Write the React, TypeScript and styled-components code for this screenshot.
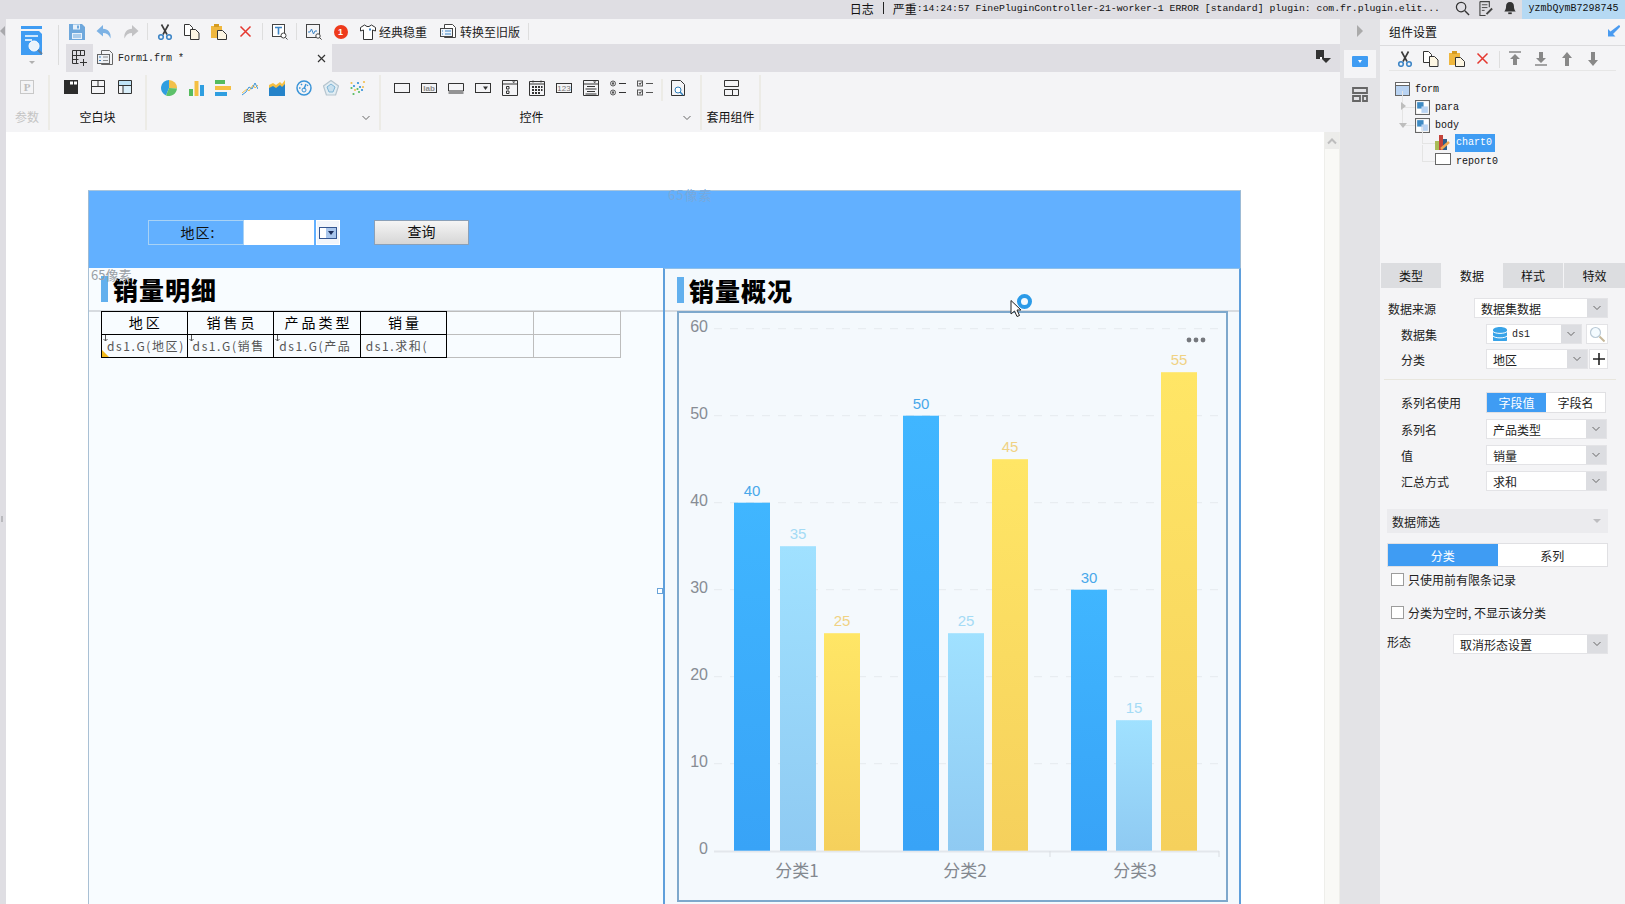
import React from "react";
import styled, { createGlobalStyle } from "styled-components";

const UI = `"Noto Sans CJK SC", "Liberation Sans", sans-serif`;
const MONO = `"Liberation Mono", "Noto Sans CJK SC", monospace`;

const Global = createGlobalStyle`
  html, body { margin: 0; padding: 0; background: #f4f4f6; }
  * { box-sizing: border-box; }
  body { font-family: ${UI}; font-size: 12px; color: #222; }
`;

const Ico = styled.svg<{ $s?: number }>`
  display: block;
  flex: none;
  width: ${(p) => p.$s ?? 16}px;
  height: ${(p) => p.$s ?? 16}px;
`;

const K = "#333";
const icons: Record<string, React.ReactNode> = {
  save: (<><path fill="#6fa8dc" d="M0 0h13l3 3v13H0z" /><rect x="4" y="0.5" width="7" height="5" fill="#e8f1fa" /><rect x="8" y="1.5" width="2" height="3" fill="#6fa8dc" /><rect x="3" y="9" width="10" height="6" fill="#e8f1fa" /><path stroke="#6fa8dc" d="M4 11h8M4 13h8" /></>),
  undo: <path fill="#7db2e4" d="M7 1 0.5 7 7 12.5V9c3.5 0 6 1.6 7.5 5.5C15.5 9 12 4.8 7 4.8z" />,
  redo: <path fill="#c2c2c4" d="M9 1l6.5 6L9 12.5V9c-3.5 0-6 1.6-7.5 5.5C.5 9 4 4.8 9 4.8z" />,
  cut: (<><path stroke="#3a3a3a" strokeWidth="1.6" fill="none" d="M4.5 0.5l5.5 10M11.5 0.5L6 10.5" /><circle cx="4" cy="13" r="2.3" fill="none" stroke="#3d85c6" strokeWidth="1.6" /><circle cx="12" cy="13" r="2.3" fill="none" stroke="#3d85c6" strokeWidth="1.6" /></>),
  copy: (<><path fill="#fff" stroke={K} d="M.5.5h5l3 3v8h-8z" /><path fill="#fdf6e3" stroke={K} d="M6.5 5.5h5l3.5 3.5v6.5H6.5z" /></>),
  paste: (<><rect x="0" y="2" width="11" height="12" fill="#efb73e" /><rect x="3" y="0" width="5" height="3" fill="#d59b20" /><path fill="#fdf6e3" stroke={K} d="M6.5 6.5h5l4 4v5h-9z" /></>),
  del: <path stroke="#e5372f" strokeWidth="1.5" d="M2.5 2.5l10 10M12.5 2.5l-10 10" />,
  tsearch: (<><rect x="0.5" y="0.5" width="12" height="12" fill="#fff" stroke="#444" /><path stroke="#3d85c6" strokeWidth="1.6" d="M3 3.5h7M6.5 3.5v7" /><circle cx="11.5" cy="11.5" r="2.5" fill="#fff" stroke="#444" /><path stroke="#444" d="M13.5 13.5l2 2" /></>),
  preview: (<><rect x="0.5" y="0.5" width="13" height="13" fill="none" stroke="#444" /><path fill="none" stroke="#3d85c6" d="M2 8h2l1.5-3 2 5 1.5-3h2" /><circle cx="12" cy="12" r="2.2" fill="#fff" stroke="#444" /><path stroke="#444" d="M13.6 13.6l2 2" /></>),
  shirt: (<><path fill="#fff" stroke={K} d="M4.5 1L.5 3.5v3.5l3-1v9.5h9V6l3 1V3.5L11.5 1 9 2.5H7z" /><rect x="9" y="4.5" width="2" height="2" fill="#3d85c6" /></>),
  oldver: (<><path fill="#fff" stroke="#444" d="M4.5.5h8l3 3v10h-11z" /><rect x="0.5" y="4.5" width="12" height="8" fill="#eef4fb" stroke="#444" /><path stroke="#3d85c6" d="M2 7h1M2 10h1M5 7h6M5 10h6" /></>),
  tabadd: (<><path fill="none" stroke={K} d="M.5.5h12v5M.5.5v13h6M4.5.5v13M8.5.5v5M.5 5.5h12M.5 9.5h6" /><path stroke={K} d="M8 12.5h7M11.5 9v7" /></>),
  formdoc: (<><path fill="#f4f4f6" stroke="#666" d="M4.5.5h8l3 3v11h-11z" /><rect x="0.5" y="4.5" width="12" height="9" fill="#eef1f5" stroke="#666" /><path stroke="#3d85c6" d="M2 7h2M2 10.5h2" /><path stroke="#8a8a8a" d="M6 7h5M6 10.5h5" /></>),
  pin: (<><rect x="0" y="0" width="8" height="9" fill="#333" /><path fill="#333" d="M5 8h10l-5 5z" /><path fill="#fff" d="M4 7h2v2H4z" /></>),
  pie: (<><path fill="#2f9ee0" d="M8 8V0a8 8 0 0 0-3 15.4z" /><path fill="#f2c04a" d="M8 0a8 8 0 0 1 8 8.5L8 8z" /><path fill="#5dc16a" d="M16 8.5A8 8 0 0 1 5 15.4L8 8z" /></>),
  bars: (<><rect x="1" y="9" width="4" height="7" fill="#55bb5e" /><rect x="6.5" y="1" width="4" height="15" fill="#f5bf42" /><rect x="12" y="5" width="4" height="11" fill="#2f9ee0" /></>),
  hbars: (<><rect x="0" y="0" width="10" height="4" fill="#55bb5e" /><rect x="0" y="6" width="16" height="4" fill="#f5bf42" /><rect x="0" y="12" width="12" height="4" fill="#2f9ee0" /></>),
  line: (<><path fill="none" stroke="#f0bf50" d="M0 13l5-4 2 2 4-6 2 3 3-3" /><path fill="none" stroke="#3d95d8" d="M0 15l4-3 3-5 3 2 3-6 3 6" /></>),
  area: (<><path fill="#f5bf42" d="M0 5l4-2 3 2 4-3 2 2 3-4v10H0z" /><path fill="#2583c9" d="M0 8l4-2 3 2 4-3 2 2 3-3v12H0z" /></>),
  gauge: (<><circle cx="8" cy="8" r="7" fill="none" stroke="#3a94d8" strokeWidth="1.5" /><circle cx="8" cy="10" r="2" fill="none" stroke="#3a94d8" /><path stroke="#3a94d8" strokeWidth="1.5" d="M8 9l2-5M3 8h1.5M5 4l1 1M12 5l-.8.8" /></>),
  radar: (<><path fill="#e2edf3" stroke="#b6c5cf" strokeWidth="1.2" d="M8 .5l7.5 5.5-2.9 9H3.4L.5 6z" /><path fill="#c9e0ee" stroke="#7fb5d6" d="M8 4l4 3-2 5H6L4 7z" /></>),
  scatter: (<><g fill="#f0bf50"><circle cx="1.5" cy="3" r="1.1" /><circle cx="14" cy="2" r="1.1" /><circle cx="13" cy="7" r="1.1" /><circle cx="5" cy="10" r="1.1" /></g><g fill="#2f8fd8"><circle cx="8" cy="3" r="1.1" /><circle cx="4" cy="6" r="1.1" /><circle cx="10" cy="7" r="1.1" /><circle cx="12" cy="10" r="1.1" /></g><g fill="#55bb5e"><circle cx="1.5" cy="8" r="1.1" /><circle cx="7.5" cy="9" r="1.1" /><circle cx="3.5" cy="14" r="1.1" /><circle cx="9" cy="12" r="1.1" /></g></>),
  param: (<><rect x="0.5" y="0.5" width="13" height="13" fill="none" stroke="#c8c8c8" /><text x="7" y="11" fontFamily="Liberation Serif" fontWeight="700" fontSize="11" fill="#bdbdbd" textAnchor="middle">P</text></>),
  block1: (<><rect width="14" height="14" fill="#2c2c2c" /><rect x="6" y="1.5" width="3" height="3" fill="#fff" /><rect x="10" y="1.5" width="3" height="3" fill="#fff" /></>),
  block2: <path fill="none" stroke={K} d="M.5.5h13v13H.5zM.5 6.5h13M7 .5v6" />,
  block3: (<><rect x="1" y="1" width="12" height="4.5" fill="#bfe3f6" /><rect x="5" y="5" width="8" height="8" fill="#d9eef9" /><path fill="none" stroke={K} d="M.5.5h13v13H.5zM.5 5.5h13M5 5.5v8" /></>),
  c1: <rect x="0.5" y="3.5" width="15" height="9" fill="none" stroke={K} />,
  c2: (<><rect x="0.5" y="3.5" width="15" height="9" fill="#f4f4f6" stroke={K} /><text x="8" y="11" textAnchor="middle" fontFamily="Liberation Sans" fontWeight="700" fontSize="8" fill="#8a8a8a">lab</text></>),
  c3: <path fill="none" stroke={K} d="M.5 3.5h15v7.5H.5zM.5 13h15" />,
  c4: (<><rect x="0.5" y="3.5" width="15" height="9" fill="none" stroke={K} /><path fill={K} d="M8 6.5h5l-2.5 3.5z" /></>),
  c5: (<><path fill="none" stroke={K} d="M.5.5h15v15H.5zM.5 4h15" /><path fill={K} d="M10 1.5h3.5L11.7 3z" /><path fill="none" stroke={K} d="M4.5 6.5h2.5v2.5H4.5zM4.5 11h2.5v2.5H4.5z" /></>),
  c6: (<><path fill="none" stroke={K} d="M.5 1.5h15v14H.5zM.5 4h15" /><path stroke={K} d="M4 .5v2M12 .5v2" /><g fill={K}><rect x="3" y="6" width="2" height="2" /><rect x="6" y="6" width="2" height="2" /><rect x="9" y="6" width="2" height="2" /><rect x="12" y="6" width="1.5" height="2" /><rect x="3" y="9" width="2" height="2" /><rect x="6" y="9" width="2" height="2" /><rect x="9" y="9" width="2" height="2" /><rect x="12" y="9" width="1.5" height="2" /><rect x="3" y="12" width="2" height="2" /><rect x="6" y="12" width="2" height="2" /><rect x="9" y="12" width="2" height="2" /></g></>),
  c7: (<><rect x="0.5" y="3.5" width="15" height="9" fill="#f4f4f6" stroke={K} /><text x="8" y="11" textAnchor="middle" fontFamily="Liberation Sans" fontSize="8" fill="#777">123</text></>),
  c8: (<><path fill="none" stroke={K} d="M.5.5h15v15H.5zM.5 4h15" /><path fill={K} d="M10 1.5h3.5L11.7 3z" /><path stroke={K} d="M4 6.5h8M2.5 9h11M4 11.5h8M2.5 14h11" /></>),
  c9: (<><circle cx="3" cy="3.5" r="2.5" fill="none" stroke="#555" /><circle cx="3" cy="3.5" r="1.2" fill="#555" /><circle cx="3" cy="12.5" r="2.5" fill="none" stroke="#555" /><circle cx="3" cy="12.5" r="1.2" fill="#555" /><path stroke={K} d="M9 3.5h7M9 12.5h7" /></>),
  c10: (<><rect x="0.5" y="1" width="5" height="5" fill="none" stroke="#555" /><rect x="0.5" y="10" width="5" height="5" fill="none" stroke="#555" /><path stroke="#555" d="M2 3.5l1 1 1.5-2M2 12.5l1 1 1.5-2M9 3.5h7M9 12.5h7" /></>),
  cdoc: (<><path fill="none" stroke={K} d="M.5.5h9l4 4v11H.5z" /><circle cx="7" cy="10" r="3" fill="#fff" stroke="#2f7db8" /><path stroke="#2f7db8" strokeWidth="1.4" d="M9 12l3 3" /></>),
  tpl: <path fill="none" stroke={K} d="M.5.5h14v6H.5zM.5 9.5h8v6H.5zM8.5 9.5h6v6h-6z" />,
  magn: (<><circle cx="6.5" cy="6.5" r="5" fill="none" stroke="#333" strokeWidth="1.3" /><path stroke="#333" strokeWidth="1.5" d="M10.5 10.5l4.5 4.5" /></>),
  edit: (<><path fill="none" stroke="#444" strokeWidth="1.2" d="M1 .6h10v6M1 .6v14.800h6" /><path stroke="#444" d="M3 4h6M3 7h6M3 10h3" /><path stroke="#444" strokeWidth="2" d="M8 14l6-6" /></>),
  bell: (<><path fill="#333" d="M8 1c-3 0-4.5 2-4.5 5 0 3-.8 4.5-2 6h13c-1.2-1.500-2-3-2-6 0-3-1.5-5-4.5-5z" /><rect x="6" y="13" width="4" height="2" fill="#333" /></>),
  layout: <path fill="none" stroke="#666" strokeWidth="1.8" d="M1 1h14v5H1zM1 9h7v5H1zM11 9h4v5h-4z" />,
  corner: <path fill="#4a9bf0" d="M11 0l1.5 1.5L5 9l2.5 2.5H0V4l2.500 2.500z" />,
  top: (<><path stroke="#888" strokeWidth="1.5" d="M1 1h12" /><path fill="#888" d="M7 3l5 5H9v6H5V8H2z" /></>),
  bottom: (<><path stroke="#888" strokeWidth="1.5" d="M1 14h12" /><path fill="#888" d="M7 12L2 7h3V1h4v6h3z" /></>),
  up: <path fill="#888" d="M7 1l5 6H9v8H5V7H2z" />,
  down: <path fill="#888" d="M7 15L2 9h3V1h4v8h3z" />,
  form: (<><rect x="0.5" y="0.5" width="14" height="13" fill="#fff" stroke="#666" /><rect x="1" y="4" width="13" height="9" fill="#b9d3f2" /><path stroke="#666" d="M1 3.5h13" /></>),
  sub: (<><rect x="0.5" y="0.5" width="13" height="13" fill="#fff" stroke="#666" /><rect x="2" y="2" width="6" height="6" fill="#3f8bc4" /><rect x="6" y="6" width="6" height="6" fill="#b9d3f2" /></>),
  chart: (<><rect x="0" y="6" width="4" height="9" fill="#a9bb56" /><rect x="4" y="0" width="4" height="15" fill="#c4433a" /><rect x="8" y="4" width="4" height="11" fill="#2d5f8c" /><path stroke="#f0a850" strokeWidth="2.5" d="M6 14l8-7" /></>),
  report: <rect x="0.5" y="0.5" width="15" height="11" fill="#fff" stroke="#666" />,
  db: (<><path fill="#38a3e8" d="M0 3c0-4 14-4 14 0v10c0 4-14 4-14 0z" /><path fill="none" stroke="#fff" d="M0 4.5c2 2.5 12 2.500 14 0M0 9c2 2.5 12 2.500 14 0" /></>),
  search: (<><circle cx="6.5" cy="6.5" r="5" fill="#f4fbff" stroke="#b9c9d6" strokeWidth="1.2" /><path stroke="#c6b89a" strokeWidth="2" d="M10.5 10.5l5 5" /></>),
  stripDrop: (<><rect width="16" height="11" rx="1" fill="#3f9cf3" /><path fill="#fff" d="M6 4h4L8 7z" /></>),
};

const Icon = ({ n, s, box }: { n: string; s?: number; box?: number }) => (
  <Ico $s={s} viewBox={`0 0 ${box ?? 16} ${box ?? 16}`}>{icons[n]}</Ico>
);

const Chevron = () => (
  <Ico $s={8} viewBox="0 0 8 8"><path d="M.5 2l3.5 3.5L7.5 2" fill="none" stroke="#666" /></Ico>
);

/* ---------- page frame ---------- */
const Page = styled.div`
  width: 1625px;
  height: 904px;
  overflow: hidden;
  display: flex;
  flex-direction: column;
  background: #f4f4f6;
`;
const TopBar = styled.header`
  height: 19px;
  flex: none;
  background: #dfdee3;
  display: flex;
  justify-content: flex-end;
  align-items: center;
  white-space: pre;
  line-height: 17px;
`;
const LogZh = styled.span`
  font-size: 12px;
  color: #111;
  margin-bottom: 3px;
`;
const LogSep = styled.span`
  width: 1px;
  height: 12px;
  background: #222;
  margin: 0 9px 3px 9px;
`;
const LogMono = styled.span`
  font: 9.8px ${MONO};
  color: #111;
  margin-right: 4px;
  margin-bottom: 3px;
`;
const TopIcon = styled.span`
  margin-left: 10px;
  margin-right: -1px;
  margin-bottom: 3px;
  width: 16px;
  display: flex;
  justify-content: center;
  & + & { margin-left: 9px; }
`;
const UserBox = styled.span`
  width: 103px;
  margin-left: 5px;
  height: 19px;
  background: #b5d9f3;
  font: 10px/17px ${MONO};
  color: #111;
  text-align: center;
`;
const Main = styled.div`
  flex: 1;
  min-height: 0;
  display: flex;
`;
const Sliver = styled.div`
  width: 6px;
  flex: none;
  background: #dfdee3;
  position: relative;
  &::before {
    content: "";
    position: absolute;
    left: 0;
    top: 7px;
    border: 5px solid transparent;
    border-right-color: #a8a8ac;
    border-left-width: 0;
  }
  &::after {
    content: "";
    position: absolute;
    left: 1px;
    top: 497px;
    width: 2px;
    height: 6px;
    background: #b9b9bd;
  }
`;
const Work = styled.div`
  width: 1334px;
  flex: none;
  display: flex;
  flex-direction: column;
  min-height: 0;
`;
const Head = styled.div`
  display: flex;
  height: 53px;
  flex: none;
`;
const LogoCol = styled.div`
  width: 53px;
  flex: none;
  position: relative;
  padding: 7px 0 0 15px;
  &::after {
    content: "";
    position: absolute;
    right: 0;
    top: 6px;
    height: 40px;
    width: 1px;
    background: #dcdcdc;
  }
`;
const LogoSvg = styled.svg`
  display: block;
  width: 22px;
  height: 38px;
`;
const HeadRows = styled.div`
  flex: 1;
  display: flex;
  flex-direction: column;
`;
const Tools = styled.div`
  height: 25px;
  flex: none;
  display: flex;
  align-items: center;
  padding-left: 4px;
`;
const Slot = styled.span<{ $w?: number }>`
  width: ${(p) => p.$w ?? 27}px;
  flex: none;
  display: flex;
  justify-content: center;
`;
const VSep = styled.span<{ $l?: number; $r?: number }>`
  width: 1px;
  height: 17px;
  flex: none;
  background: #dedede;
  margin: 0 ${(p) => p.$r ?? 3}px 0 ${(p) => p.$l ?? 3}px;
`;
const Badge = styled.span`
  width: 14px;
  height: 14px;
  border-radius: 50%;
  background: #ee3a1c;
  color: #fff;
  font: 700 9px/14px "Liberation Sans", sans-serif;
  text-align: center;
`;
const TextTool = styled.span<{ $ml: number; $gap: number }>`
  display: flex;
  align-items: center;
  gap: ${(p) => p.$gap}px;
  margin-left: ${(p) => p.$ml}px;
  font-size: 12px;
  color: #222;
`;
const TabStrip = styled.div`
  margin-left: 7px;
  height: 28px;
  flex: none;
  background: #dfdee3;
  display: flex;
  align-items: stretch;
`;
const TabAdd = styled.span`
  width: 27px;
  display: flex;
  align-items: center;
  justify-content: center;
`;
const Tab = styled.span`
  width: 239px;
  background: #f4f4f6;
  display: flex;
  align-items: center;
  padding-left: 4px;
  font: 10px ${MONO};
  color: #222;
  white-space: pre;
`;
const TabName = styled.span`
  margin-left: 5px;
  flex: 1;
`;
const TabClose = styled.span`
  margin-right: 6px;
`;
const TabEnd = styled.span`
  margin-left: auto;
  margin-right: 8px;
  align-self: center;
`;
const Ribbon = styled.div`
  height: 60px;
  flex: none;
  display: flex;
  background: #f4f4f6;
`;
const RGroup = styled.div<{ $w: number }>`
  width: ${(p) => p.$w}px;
  flex: none;
  position: relative;
  display: flex;
  flex-direction: column;
  border-right: 2px solid #ecebe6;
  margin: 3px 0 2px;
`;
const RIcons = styled.div<{ $left: number; $gap?: number }>`
  display: flex;
  gap: ${(p) => p.$gap ?? 11}px;
  padding: 5px 0 0 ${(p) => p.$left}px;
  height: 29px;
  flex: none;
`;
const RLabel = styled.div<{ $muted?: boolean; $pr?: number }>`
  text-align: center;
  font-size: 12px;
  line-height: 26px;
  padding-right: ${(p) => p.$pr ?? 0}px;
  color: ${(p) => (p.$muted ? "#c4c4c4" : "#111")};
`;
const RChevron = styled.span<{ $r: number }>`
  position: absolute;
  right: ${(p) => p.$r}px;
  bottom: 8px;
`;
const InnerSep = styled.span`
  width: 2px;
  height: 22px;
  background: #ecebe6;
  margin: -1px -3px 0 -3px;
`;
const CanvasRow = styled.div`
  flex: 1;
  min-height: 0;
  display: flex;
`;
const Canvas = styled.div`
  width: 1318px;
  flex: none;
  background: #fff;
  padding: 58px 0 0 82px;
  overflow: hidden;
`;
const ScrollTrack = styled.div`
  width: 16px;
  flex: none;
  background: #f9f9f6;
  border-left: 1px solid #eeeeea;
  border-right: 1px solid #eeeeea;
`;
const ScrollBtn = styled.div`
  height: 17px;
  background: #ececea;
  display: flex;
  align-items: center;
  justify-content: center;
`;

/* ---------- form canvas ---------- */
const FormArea = styled.div`
  width: 1153px;
  height: 720px;
  display: flex;
  flex-direction: column;
`;
const ParamBar = styled.div`
  height: 78px;
  flex: none;
  background: #62b0ff;
  border-top: 1px solid #a9c6de;
  border-left: 1px solid #9dbbd5;
  border-right: 1px solid #9dbbd5;
  padding: 29px 0 0 59px;
  display: flex;
  align-items: flex-start;
  position: relative;
`;
const FieldLabel = styled.div`
  width: 96px;
  height: 25px;
  border: 1px solid #a8d2f5;
  font-size: 14px;
  line-height: 22px;
  letter-spacing: 1px;
  padding-left: 4px;
  text-align: center;
  color: #111;
`;
const FieldInput = styled.div`
  width: 70px;
  height: 25px;
  background: #fff;
`;
const FieldCombo = styled.div`
  margin-left: 2px;
  width: 24px;
  height: 25px;
  background: #f1f5fb;
  border: 1px solid #fff;
  display: flex;
  align-items: center;
  justify-content: center;
`;
const QueryBtn = styled.div`
  margin-left: 34px;
  width: 95px;
  height: 25px;
  border: 1px solid #8aa0b8;
  background: linear-gradient(#f5f5f5, #d6d6d6);
  font-size: 14px;
  line-height: 21px;
  text-align: center;
  color: #111;
`;
const FaintTag = styled.span`
  position: absolute;
  left: 579px;
  top: -6px;
  font-size: 13px;
  letter-spacing: 1px;
  color: #78a9dc;
`;
const Panes = styled.div`
  flex: 1;
  display: flex;
  min-height: 0;
`;
const LeftPane = styled.section`
  width: 575px;
  flex: none;
  background: #f8fcff;
  border-left: 1px solid #a9c0d4;
  position: relative;
`;
const RightPane = styled.section`
  width: 578px;
  flex: none;
  background: #f4f9fd;
  border: 2px solid #5f9fdb;
  border-top: 1px solid #8fc0ea;
  position: relative;
`;
const TitleBar = styled.div<{ $left: number; $h: number }>`
  height: ${(p) => p.$h}px;
  display: flex;
  align-items: flex-start;
  padding: 7px 0 0 ${(p) => p.$left}px;
  gap: 5px;
  border-bottom: 2px solid #d7dbe0;
`;
const Accent = styled.span`
  width: 7px;
  height: 26px;
  margin-top: 1px;
  background: #62b0ee;
`;
const TitleText = styled.h2`
  margin: -1px 0 0;
  font: 900 25px/30px ${UI};
  color: #000;
  letter-spacing: 1px;
`;
const SizeTag = styled.span`
  position: absolute;
  left: 2px;
  top: -1px;
  font-size: 13px;
  line-height: 16px;
  color: #9aa0a6;
`;
const Sheet = styled.div`
  display: grid;
  grid-template-columns: repeat(6, 86.6px);
  grid-auto-rows: 23px;
  margin-left: 12px;
  position: relative;
`;
const Cell = styled.div<{ $on?: boolean; $head?: boolean }>`
  border-right: 1px solid ${(p) => (p.$on ? "#000" : "#bdbdbd")};
  border-bottom: 1px solid ${(p) => (p.$on ? "#000" : "#bdbdbd")};
  border-top: 1px solid ${(p) => (p.$on ? "#000" : "#bdbdbd")};
  margin-top: -1px;
  position: relative;
  overflow: hidden;
  white-space: nowrap;
  text-align: ${(p) => (p.$head ? "center" : "left")};
  font-size: ${(p) => (p.$head ? 14 : 12)}px;
  line-height: 21px;
  letter-spacing: ${(p) => (p.$head ? "3px" : "1.6px")};
  color: ${(p) => (p.$head ? "#000" : "#555")};
  padding-left: ${(p) => (p.$head ? 3 : 5)}px;
  font-weight: 400;
  &:nth-child(6n + 1) {
    border-left: ${(p) => (p.$on ? "1.5px solid #000" : "none")};
  }
`;
const CellExpand = styled.svg`
  position: absolute;
  left: 1px;
  top: 0;
  width: 5px;
  height: 7px;
`;
const CellCorner = styled.span`
  position: absolute;
  left: 0;
  bottom: 0;
  border-style: solid;
  border-width: 7px 0 0 7px;
  border-color: transparent transparent transparent #f2b91a;
`;
const Handle = styled.span`
  position: absolute;
  right: 0;
  top: 320px;
  width: 6px;
  height: 6px;
  background: #fff;
  border: 1px solid #6aa3d8;
  z-index: 1;
`;
const ChartBox = styled.div`
  margin: -1px 0 0 12px;
  width: 551px;
  height: 591px;
  border: 2px solid #7ea8cc;
  background: #f4f9fd;
`;
const ChartSvg = styled.svg`
  display: block;
  width: 547px;
  height: 587px;
`;
const CursorMark = styled.svg`
  position: absolute;
  left: 345px;
  top: 21px;
  width: 30px;
  height: 32px;
`;

/* ---------- side strip ---------- */
const Strip = styled.aside`
  width: 40px;
  flex: none;
  background: #e3e3e6;
  display: flex;
  flex-direction: column;
  align-items: center;
  padding-top: 6px;
`;
const StripArrow = styled.span`
  border: 6px solid transparent;
  border-left: 6px solid #aaa;
  border-right-width: 0;
  margin: 0 0 5px 0;
`;
const StripActive = styled.span`
  width: 32px;
  height: 28px;
  margin-top: 8px;
  background: #f4f4f6;
  display: flex;
  align-items: center;
  justify-content: center;
`;
const StripBtn = styled.span`
  margin-top: 9px;
`;

/* ---------- right panel ---------- */
const Panel = styled.aside`
  flex: 1;
  min-width: 0;
  background: #f4f4f6;
`;
const PanelTitle = styled.div`
  height: 27px;
  border-bottom: 1px solid #dcdcde;
  padding: 0 5px 2px 9px;
  display: flex;
  align-items: center;
  justify-content: space-between;
  font-size: 12px;
  color: #111;
`;
const PanelTools = styled.div`
  margin: 0 9px;
  height: 25px;
  padding: 2px 0 0 3px;
  border-bottom: 1px solid #e6e6e6;
  display: flex;
  align-items: center;
`;
const Tree = styled.div`
  height: 192px;
  padding-top: 9px;
`;
const TreeRow = styled.div<{ $in: number; $guide?: number }>`
  position: relative;
  height: 18px;
  display: flex;
  align-items: center;
  padding-left: ${(p) => p.$in}px;
  font: 10px ${MONO};
  color: #111;
  gap: 5px;
  &::before {
    content: ${(p) => (p.$guide ? '""' : "none")};
    position: absolute;
    left: ${(p) => p.$guide ?? 0}px;
    top: -7px;
    width: 12px;
    height: 16px;
    border-left: 1px solid #e4e4e4;
    border-bottom: 1px solid #e4e4e4;
  }
`;
const Expander = styled.span<{ $open?: boolean }>`
  position: absolute;
  left: ${(p) => (p.$open ? 19 : 21)}px;
  top: ${(p) => (p.$open ? 7 : 4)}px;
  border-style: solid;
  border-color: transparent;
  ${(p) =>
    p.$open
      ? "border-width: 5px 4.5px 0 4.5px; border-top-color: #bdbdbd;"
      : "border-width: 4.5px 0 4.5px 5px; border-left-color: #bdbdbd;"}
`;
const TreeSel = styled.span`
  background: #3f9cf3;
  color: #fff;
  width: 40px;
  height: 18px;
  line-height: 18px;
  padding-left: 1px;
  margin-left: -1px;
`;
const PTabs = styled.div`
  display: grid;
  grid-template-columns: 60px 60px 60px 1fr;
  gap: 1px;
  height: 25px;
  padding-left: 1px;
`;
const PTab = styled.div<{ $on?: boolean }>`
  background: ${(p) => (p.$on ? "#f4f4f6" : "#dcdde0")};
  text-align: center;
  line-height: 25px;
  font-size: 12px;
  color: #111;
`;
const Row = styled.div<{ $mt: number }>`
  display: flex;
  align-items: center;
  height: 20px;
  margin-top: ${(p) => p.$mt}px;
`;
const Lbl = styled.span<{ $w: number; $in: number; $up?: number }>`
  width: ${(p) => p.$w}px;
  flex: none;
  padding-left: ${(p) => p.$in}px;
  margin-top: ${(p) => -(p.$up ?? 0)}px;
  font-size: 12px;
  color: #222;
`;
const Select = styled.div<{ $w: number }>`
  width: ${(p) => p.$w}px;
  height: 20px;
  flex: none;
  background: #fff;
  border: 1px solid #e3e3e6;
  display: flex;
  align-items: center;
  padding-left: 6px;
  font-size: 12px;
  color: #222;
  gap: 5px;
`;
const SelText = styled.span`
  flex: 1;
  min-width: 0;
  white-space: nowrap;
`;
const Mono = styled.span`
  font: 10px ${MONO};
  flex: 1;
`;
const Arrow = styled.span`
  width: 20px;
  height: 18px;
  background: #dcdde1;
  display: flex;
  align-items: center;
  justify-content: center;
  flex: none;
`;
const MiniBtn = styled.span<{ $w: number; $ml: number }>`
  width: ${(p) => p.$w}px;
  margin-left: ${(p) => p.$ml}px;
  height: 20px;
  flex: none;
  background: #fff;
  border: 1px solid #e3e3e6;
  display: flex;
  align-items: center;
  justify-content: center;
`;
const Divider = styled.div`
  height: 1px;
  background: #e8e6de;
  margin: 10px 9px 0 4px;
`;
const Toggle = styled.div<{ $w: number; $h: number; $ml?: number; $mt?: number }>`
  width: ${(p) => p.$w}px;
  height: ${(p) => p.$h}px;
  margin-left: ${(p) => p.$ml ?? 0}px;
  margin-top: ${(p) => p.$mt ?? 0}px;
  flex: none;
  display: grid;
  grid-template-columns: 1fr 1fr;
  border: 1px solid #e0e0e3;
  background: #fff;
`;
const ToggleCell = styled.span<{ $on?: boolean }>`
  background: ${(p) => (p.$on ? "#3f9cf3" : "transparent")};
  color: ${(p) => (p.$on ? "#fff" : "#222")};
  display: flex;
  align-items: center;
  justify-content: center;
  font-size: 12px;
`;
const FilterBar = styled.div`
  margin: 18px 0 0 7px;
  width: 221px;
  height: 24px;
  background: #ebebee;
  padding: 0 5px;
  display: flex;
  align-items: center;
  justify-content: space-between;
  font-size: 12px;
  color: #222;
  &::after {
    content: "";
    border-style: solid;
    border-width: 4px 4px 0 4px;
    border-color: #bdbdc0 transparent transparent transparent;
    margin-right: 2px;
  }
`;
const CheckRow = styled.label<{ $mt: number }>`
  display: flex;
  align-items: center;
  gap: 4px;
  margin: ${(p) => p.$mt}px 0 0 11px;
  height: 14px;
  font-size: 12px;
  color: #222;
`;
const Box = styled.span`
  width: 13px;
  height: 13px;
  background: #fff;
  border: 1px solid #9c9c9c;
  flex: none;
`;

const groups = [
  { name: "分类1", xs: [734, 780, 824], vals: [40, 35, 25], tx: 797 },
  { name: "分类2", xs: [903, 948, 992], vals: [50, 25, 45], tx: 965 },
  { name: "分类3", xs: [1071, 1116, 1161], vals: [30, 15, 55], tx: 1135 },
];
const fills = ["url(#gBlue)", "url(#gLight)", "url(#gYellow)"];
const labelCols = ["#48a8ea", "#a4dbf5", "#f0d283"];
const BASE = 850.7;
const UNIT = 8.7;

const Chart = () => (
  <ChartSvg viewBox="679 313 547 587">
    <defs>
      <linearGradient id="gBlue" x1="0" y1="0" x2="0" y2="1"><stop offset="0" stopColor="#40b6ff" /><stop offset="1" stopColor="#38a3f7" /></linearGradient>
      <linearGradient id="gLight" x1="0" y1="0" x2="0" y2="1"><stop offset="0" stopColor="#a0e1ff" /><stop offset="1" stopColor="#8fcaf2" /></linearGradient>
      <linearGradient id="gYellow" x1="0" y1="0" x2="0" y2="1"><stop offset="0" stopColor="#ffe666" /><stop offset="1" stopColor="#f5d05c" /></linearGradient>
    </defs>
    {[60, 50, 40, 30, 20, 10, 0].map((v) => (
      <g key={v}>
        <text x="708" y={BASE - v * UNIT + 3.5} textAnchor="end" fontFamily="Liberation Sans" fontSize="16" fill="#878c94">{v}</text>
        {v > 0 && <line x1="714" x2="1219" y1={BASE - v * UNIT} y2={BASE - v * UNIT} stroke="#e6eaee" strokeDasharray="8 8" />}
      </g>
    ))}
    <line x1="714" x2="1219" y1="851.5" y2="851.5" stroke="#e3e7ec" strokeWidth="2" />
    <line x1="1050" x2="1050" y1="851" y2="857" stroke="#d9dde2" />
    <line x1="1219" x2="1219" y1="851" y2="857" stroke="#d9dde2" />
    {groups.map((g) => (
      <g key={g.name}>
        {g.vals.map((v, i) => (
          <g key={i}>
            <rect x={g.xs[i]} y={BASE - v * UNIT} width="36" height={v * UNIT} fill={fills[i]} />
            <text x={g.xs[i] + 18} y={BASE - v * UNIT - 7} textAnchor="middle" fontFamily="Liberation Sans" fontSize="15" fill={labelCols[i]}>{v}</text>
          </g>
        ))}
        <text x={g.tx} y="877" textAnchor="middle" fontFamily={UI} fontSize="17" fill="#83888f">{g.name}</text>
      </g>
    ))}
    <g fill="#75787d"><circle cx="1189" cy="340" r="2.4" /><circle cx="1196" cy="340" r="2.4" /><circle cx="1203" cy="340" r="2.4" /></g>
  </ChartSvg>
);

const Sel = ({ w, children }: { w: number; children: React.ReactNode }) => (
  <Select $w={w}><SelText>{children}</SelText><Arrow><Chevron /></Arrow></Select>
);

const Down = () => (
  <CellExpand viewBox="0 0 5 7"><path stroke="#555" fill="none" d="M2.5 0v6M.5 4l2 2 2-2" /></CellExpand>
);

export default function App() {
  return (
    <Page>
      <Global />
      <TopBar>
        <LogZh>日志</LogZh>
        <LogSep />
        <LogZh>严重</LogZh>
        <LogMono>:14:24:57 FinePluginController-21-worker-1 ERROR [standard] plugin: com.fr.plugin.elit...</LogMono>
        <TopIcon><Icon n="magn" s={15} /></TopIcon>
        <TopIcon><Icon n="edit" s={15} /></TopIcon>
        <TopIcon><Icon n="bell" s={14} /></TopIcon>
        <UserBox>yzmbQymB7298745</UserBox>
      </TopBar>
      <Main>
        <Sliver />
        <Work>
          <Head>
            <LogoCol>
              <LogoSvg viewBox="0 0 22 38">
                <rect x="0" y="0" width="21" height="3" fill="#3f9cf3" />
                <path fill="#3f9cf3" d="M0 5h18l3 3v21H0z" />
                <path stroke="#fff" strokeWidth="1.5" d="M4 10h13M4 14h7" />
                <circle cx="13" cy="20" r="5" fill="#eaf3fb" stroke="#fff" />
                <path stroke="#5d7f9e" strokeWidth="2" d="M17 24l4 4" />
                <path fill="#b0b0b0" d="M8 35h6l-3 3z" />
              </LogoSvg>
            </LogoCol>
            <HeadRows>
              <Tools>
                <Slot><Icon n="save" /></Slot>
                <Slot><Icon n="undo" /></Slot>
                <Slot><Icon n="redo" /></Slot>
                <VSep />
                <Slot><Icon n="cut" /></Slot>
                <Slot><Icon n="copy" /></Slot>
                <Slot><Icon n="paste" /></Slot>
                <Slot><Icon n="del" /></Slot>
                <VSep />
                <Slot><Icon n="tsearch" /></Slot>
                <VSep />
                <Slot><Icon n="preview" /></Slot>
                <Slot><Badge>1</Badge></Slot>
                <TextTool $ml={6} $gap={3}><Icon n="shirt" />经典稳重</TextTool>
                <TextTool $ml={13} $gap={4}><Icon n="oldver" />转换至旧版</TextTool>
                <VSep $l={8} />
              </Tools>
              <TabStrip>
                <TabAdd><Icon n="tabadd" /></TabAdd>
                <Tab>
                  <Icon n="formdoc" />
                  <TabName>Form1.frm *</TabName>
                  <TabClose><Ico $s={9} viewBox="0 0 9 9"><path stroke="#333" strokeWidth="1.2" d="M1 1l7 7M8 1L1 8" /></Ico></TabClose>
                </Tab>
                <TabEnd><Icon n="pin" /></TabEnd>
              </TabStrip>
            </HeadRows>
          </Head>
          <Ribbon>
            <RGroup $w={44}>
              <RIcons $left={14}><Icon n="param" s={14} box={14} /></RIcons>
              <RLabel $muted>参数</RLabel>
            </RGroup>
            <RGroup $w={97}>
              <RIcons $left={14} $gap={13}><Icon n="block1" s={14} box={14} /><Icon n="block2" s={14} box={14} /><Icon n="block3" s={14} box={14} /></RIcons>
              <RLabel>空白块</RLabel>
            </RGroup>
            <RGroup $w={234}>
              <RIcons $left={14}>
                {["pie", "bars", "hbars", "line", "area", "gauge", "radar", "scatter"].map((n) => <Icon key={n} n={n} />)}
              </RIcons>
              <RLabel $pr={16}>图表</RLabel>
              <RChevron $r={9}><Chevron /></RChevron>
            </RGroup>
            <RGroup $w={321}>
              <RIcons $left={13}>
                {["c1", "c2", "c3", "c4", "c5", "c6", "c7", "c8", "c9", "c10"].map((n) => <Icon key={n} n={n} />)}
                <InnerSep />
                <Icon n="cdoc" />
              </RIcons>
              <RLabel $pr={18}>控件</RLabel>
              <RChevron $r={9}><Chevron /></RChevron>
            </RGroup>
            <RGroup $w={59}>
              <RIcons $left={22}><Icon n="tpl" /></RIcons>
              <RLabel>套用组件</RLabel>
            </RGroup>
          </Ribbon>
          <CanvasRow>
            <Canvas>
              <FormArea>
                <ParamBar>
                  <FaintTag>65像素</FaintTag>
                  <FieldLabel>地区:</FieldLabel>
                  <FieldInput />
                  <FieldCombo>
                    <Ico $s={18} viewBox="0 0 18 12"><rect x="0.5" y="0.5" width="17" height="11" fill="#fff" stroke="#34558f" /><rect x="7" y="1" width="10" height="10" fill="#a9c6ec" /><path fill="#1d2f5c" d="M9 4h6l-3 4z" /></Ico>
                  </FieldCombo>
                  <QueryBtn>查询</QueryBtn>
                </ParamBar>
                <Panes>
                  <LeftPane>
                    <SizeTag>65像素</SizeTag>
                    <TitleBar $left={12} $h={44}><Accent /><TitleText>销量明细</TitleText></TitleBar>
                    <Sheet>
                      <Cell $on $head>地区</Cell>
                      <Cell $on $head>销售员</Cell>
                      <Cell $on $head>产品类型</Cell>
                      <Cell $on $head>销量</Cell>
                      <Cell />
                      <Cell />
                      <Cell $on><Down />ds1.G(地区)<CellCorner /></Cell>
                      <Cell $on><Down />ds1.G(销售</Cell>
                      <Cell $on><Down />ds1.G(产品</Cell>
                      <Cell $on>ds1.求和(</Cell>
                      <Cell />
                      <Cell />
                    </Sheet>
                    <Handle />
                  </LeftPane>
                  <RightPane>
                    <TitleBar $left={12} $h={43}><Accent /><TitleText>销量概况</TitleText></TitleBar>
                    <ChartBox><Chart /></ChartBox>
                    <CursorMark viewBox="0 0 30 32">
                      <path fill="#fff" stroke="#222" d="M1 10.5V24l3.5-3 2.5 5.5 2.5-1-2.5-5.5H11z" />
                      <circle cx="14.5" cy="11.5" r="5.5" fill="none" stroke="#2b9be8" strokeWidth="4" />
                    </CursorMark>
                  </RightPane>
                </Panes>
              </FormArea>
            </Canvas>
            <ScrollTrack>
              <ScrollBtn><Ico $s={10} viewBox="0 0 10 7"><path fill="none" stroke="#bdbdbd" strokeWidth="2" d="M1 6l4-4 4 4" /></Ico></ScrollBtn>
            </ScrollTrack>
          </CanvasRow>
        </Work>
        <Strip>
          <StripArrow />
          <StripActive><Icon n="stripDrop" s={16} /></StripActive>
          <StripBtn><Icon n="layout" s={16} /></StripBtn>
        </Strip>
        <Panel>
          <PanelTitle>组件设置<Icon n="corner" s={12} box={12} /></PanelTitle>
          <PanelTools>
            <Slot $w={26}><Icon n="cut" /></Slot>
            <Slot $w={26}><Icon n="copy" /></Slot>
            <Slot $w={26}><Icon n="paste" /></Slot>
            <Slot $w={26}><Icon n="del" /></Slot>
            <VSep $l={3} $r={3} />
            <Slot $w={26}><Icon n="top" /></Slot>
            <Slot $w={26}><Icon n="bottom" /></Slot>
            <Slot $w={26}><Icon n="up" /></Slot>
            <Slot $w={26}><Icon n="down" /></Slot>
          </PanelTools>
          <Tree>
            <TreeRow $in={15}><Icon n="form" s={15} box={15} />form</TreeRow>
            <TreeRow $in={35} $guide={22}><Expander /><Icon n="sub" s={15} box={14} />para</TreeRow>
            <TreeRow $in={35} $guide={22}><Expander $open /><Icon n="sub" s={15} box={14} />body</TreeRow>
            <TreeRow $in={55} $guide={42}><Icon n="chart" /><TreeSel>chart0</TreeSel></TreeRow>
            <TreeRow $in={55} $guide={42}><Icon n="report" s={16} />report0</TreeRow>
          </Tree>
          <PTabs>
            <PTab>类型</PTab>
            <PTab $on>数据</PTab>
            <PTab>样式</PTab>
            <PTab>特效</PTab>
          </PTabs>
          <Row $mt={10}><Lbl $w={94} $in={8}>数据来源</Lbl><Sel w={134}>数据集数据</Sel></Row>
          <Row $mt={6}>
            <Lbl $w={106} $in={21}>数据集</Lbl>
            <Select $w={96}><Icon n="db" s={14} box={14} /><Mono>ds1</Mono><Arrow><Chevron /></Arrow></Select>
            <MiniBtn $w={22} $ml={4}><Icon n="search" s={16} /></MiniBtn>
          </Row>
          <Row $mt={5}>
            <Lbl $w={106} $in={21}>分类</Lbl>
            <Sel w={102}>地区</Sel>
            <MiniBtn $w={19} $ml={1}><Ico $s={12} viewBox="0 0 12 12"><path stroke="#222" strokeWidth="1.6" d="M0 6h12M6 0v12" /></Ico></MiniBtn>
          </Row>
          <Divider />
          <Row $mt={12}>
            <Lbl $w={106} $in={21}>系列名使用</Lbl>
            <Toggle $w={120} $h={21}><ToggleCell $on>字段值</ToggleCell><ToggleCell>字段名</ToggleCell></Toggle>
          </Row>
          <Row $mt={7}><Lbl $w={106} $in={21}>系列名</Lbl><Sel w={121}>产品类型</Sel></Row>
          <Row $mt={6}><Lbl $w={106} $in={21}>值</Lbl><Sel w={121}>销量</Sel></Row>
          <Row $mt={6}><Lbl $w={106} $in={21}>汇总方式</Lbl><Sel w={121}>求和</Sel></Row>
          <FilterBar>数据筛选</FilterBar>
          <Toggle $w={221} $h={24} $ml={7} $mt={10}><ToggleCell $on>分类</ToggleCell><ToggleCell>系列</ToggleCell></Toggle>
          <CheckRow $mt={5}><Box />只使用前有限条记录</CheckRow>
          <CheckRow $mt={19}><Box />分类为空时, 不显示该分类</CheckRow>
          <Row $mt={15}><Lbl $w={73} $in={7} $up={5}>形态</Lbl><Sel w={155}>取消形态设置</Sel></Row>
        </Panel>
      </Main>
    </Page>
  );
}
